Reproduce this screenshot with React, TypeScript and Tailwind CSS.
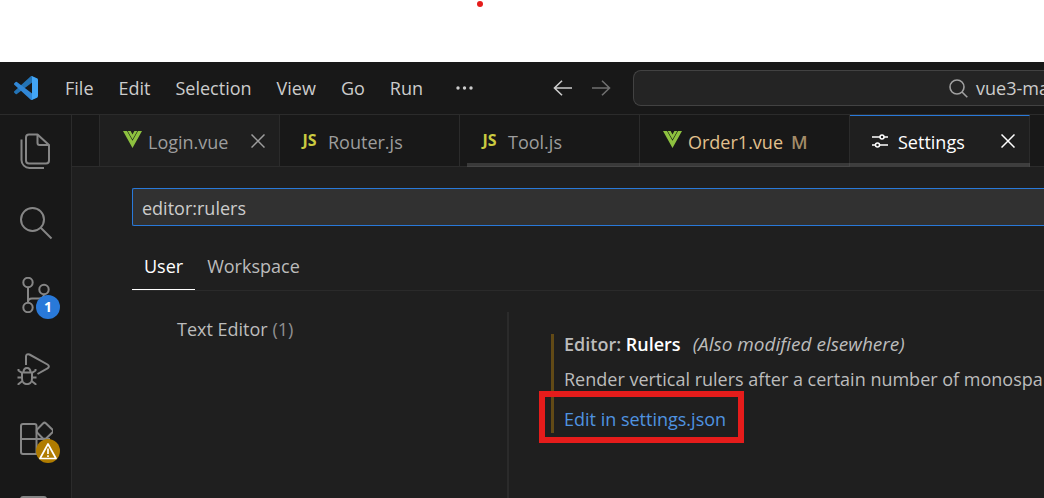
import type { ReactNode } from "react"

const menuItems = ["File", "Edit", "Selection", "View", "Go", "Run"]

function CodeLogo() {
  return (
    <svg viewBox="0 0 100 100" className="h-6 w-6 shrink-0" aria-hidden="true">
      <path
        fill="#2373b5"
        d="M96.46 10.8L75.86.88A6.2 6.2 0 0 0 68.75 2.08L1.3 63.58a4.17 4.17 0 0 0 0 6.17l5.51 5a4.17 4.17 0 0 0 5.32.24L93.36 13.37A4.14 4.14 0 0 1 100 16.67v-.24a6.25 6.25 0 0 0-3.54-5.63Z"
      />
      <path
        fill="#3187d6"
        d="M96.46 89.2l-20.6 9.92a6.2 6.2 0 0 1-7.11-1.2L1.3 36.42a4.17 4.17 0 0 1 0-6.17l5.51-5a4.17 4.17 0 0 1 5.32-.24l81.23 61.62A4.14 4.14 0 0 0 100 83.33v.24a6.25 6.25 0 0 1-3.54 5.63Z"
      />
      <path
        fill="#42a5f5"
        d="M75.86 99.13a6.2 6.2 0 0 1-7.11-1.21c2.3 2.3 6.25.67 6.25-2.59V4.67c0-3.26-3.94-4.9-6.25-2.59a6.2 6.2 0 0 1 7.11-1.21l20.6 9.91A6.25 6.25 0 0 1 100 16.41v67.18a6.25 6.25 0 0 1-3.54 5.63Z"
      />
    </svg>
  )
}

function VueIcon() {
  return (
    <svg viewBox="0 0 19 17" className="mb-1 h-[17px] w-[19px] shrink-0 fill-[#8dc13f]" aria-hidden="true">
      <path d="M0 0H4L9.5 9.8L15 0H19L9.5 17Z" />
      <path d="M4.7 0H7.6L9.5 3.4L11.4 0H14.3L9.5 8.6Z" />
    </svg>
  )
}

function JsIcon() {
  return (
    <span className="mb-1 w-[19px] shrink-0 text-center font-['Noto_Sans',sans-serif] text-base leading-5 font-bold text-[#cbcb41]">
      JS
    </span>
  )
}

function CloseIcon() {
  return (
    <svg viewBox="0 0 14 14" className="mb-0.5 h-3.5 w-3.5" fill="none" stroke="currentColor" strokeWidth="1.5">
      <path d="M0.5 0.5L13.5 13.5M13.5 0.5L0.5 13.5" />
    </svg>
  )
}

function SlidersIcon() {
  return (
    <svg viewBox="0 0 16 14" className="mb-0.5 h-3.5 w-4 shrink-0" fill="none" stroke="currentColor" strokeWidth="1.5">
      <path d="M0 3H8M12 3H16M0 11H3.5M7.5 11H16" />
      <circle cx="10" cy="3" r="2" />
      <circle cx="5.5" cy="11" r="2" />
    </svg>
  )
}

function Arrow({ back }: { back?: boolean }) {
  return (
    <svg viewBox="0 0 19 16" className="h-4 w-[19px]" fill="none" stroke="currentColor" strokeWidth="1.6">
      {back ? <path d="M9 0.7L1.5 8L9 15.3M1.5 8H19" /> : <path d="M10 0.7L17.5 8L10 15.3M17.5 8H0" />}
    </svg>
  )
}

function ActivityItem({ label, badge, children }: { label: string; badge?: ReactNode; children: ReactNode }) {
  return (
    <button type="button" aria-label={label} className="relative h-[72px] shrink-0 pl-[17px] text-[#868686]">
      <svg viewBox="0 0 36 36" className="h-9 w-9" fill="none" stroke="currentColor" strokeWidth="2" strokeLinejoin="round">
        {children}
      </svg>
      {badge}
    </button>
  )
}

function ActivityBar() {
  return (
    <nav className="flex w-[72px] shrink-0 flex-col overflow-hidden border-r border-[#2b2b2b] bg-[#181818]">
      <ActivityItem label="Explorer">
        <path d="M12 1.5H20.5L32 12V27.5A3 3 0 0 1 29 30.5H12A3 3 0 0 1 9 27.5V4.5A3 3 0 0 1 12 1.5Z" />
        <path d="M20.5 1.5V10A2 2 0 0 0 22.5 12H32" />
        <path d="M4.5 6.5V27A8 8 0 0 0 12.5 35H27" />
      </ActivityItem>
      <ActivityItem label="Search">
        <circle cx="15.5" cy="14.5" r="11.5" />
        <path d="M23.5 22.5L34.5 33.5" />
      </ActivityItem>
      <ActivityItem
        label="Source Control"
        badge={
          <span className="absolute top-9 left-9 grid h-6 w-6 place-items-center rounded-full bg-[#2979d9] text-sm leading-5 font-bold text-white">
            1
          </span>
        }
      >
        <circle cx="11" cy="5.5" r="4.7" />
        <circle cx="27" cy="12.5" r="4.7" />
        <circle cx="11" cy="30.5" r="4.7" />
        <path d="M11 10V26M27 17C27 20 25 21.5 22 21.5H15C12.5 21.5 11 23 11 25" />
      </ActivityItem>
      <ActivityItem label="Run and Debug">
        <path d="M9 16V7.5C9 5.5 10.8 4.6 12.5 5.5L30.5 15.5C32.3 16.6 32.3 18.4 30.5 19.4L20.5 25" />
        <path d="M5 23.5H15V29.5C15 37 5 37 5 29.5ZM6.5 23.5C6.5 17.5 13.5 17.5 13.5 23.5" />
        <path d="M1.5 20V21.5L5 24M18.5 20V21.5L15 24M0.5 28.5H5M15 28.5H19.5M1.5 36.5V35L5.5 32M18.5 36.5V35L14.5 32" />
      </ActivityItem>
      <ActivityItem
        label="Extensions"
        badge={
          <span className="absolute top-9 left-9 grid h-6 w-6 place-items-center rounded-full bg-[#b07c00]">
            <svg viewBox="0 0 18 17" className="h-[17px] w-[18px]" fill="none" stroke="#fff" strokeWidth="1.7" strokeLinejoin="round">
              <path d="M9 1L17 15.5H1Z" />
              <path d="M9 5.5V11M9 12.2V14" />
            </svg>
          </span>
        }
      >
        <path d="M6 3H17.5A2 2 0 0 1 19.5 5V33H6A2 2 0 0 1 4 31V5A2 2 0 0 1 6 3ZM4 18H33M19.5 33H30" />
        <path d="M26.2 2.2Q27.5 1 28.8 2.2L35.5 8.7Q36.7 10 35.5 11.3L28.8 17.8H26.2L19.8 11.3V8.7Z" />
      </ActivityItem>
      <ActivityItem label="Testing">
        <rect x="4" y="4" width="25" height="28" rx="2" />
      </ActivityItem>
    </nav>
  )
}

function TitleBar() {
  return (
    <header className="flex h-[53px] shrink-0 items-center border-b border-[#2b2b2b] bg-[#181818] pl-3.5 text-[#cccccc]">
      <CodeLogo />
      <nav className="flex w-[515px] shrink-0 items-center gap-px pl-[15px]">
        {menuItems.map((item) => (
          <button key={item} type="button" className="px-3">
            {item}
          </button>
        ))}
        <button type="button" aria-label="More" className="ml-2 px-3">
          <svg viewBox="0 0 17 4" className="h-1 w-[17px] fill-current">
            <circle cx="2" cy="2" r="1.7" />
            <circle cx="8.5" cy="2" r="1.7" />
            <circle cx="15" cy="2" r="1.7" />
          </svg>
        </button>
      </nav>
      <div className="flex w-20 shrink-0 gap-5">
        <button type="button" aria-label="Go Back">
          <Arrow back />
        </button>
        <button type="button" aria-label="Go Forward" className="text-[#6f6f6f]">
          <Arrow />
        </button>
      </div>
      <button
        type="button"
        className="flex h-9 min-w-0 flex-1 items-center gap-2 overflow-hidden rounded-l-lg border border-r-0 border-[#424242] bg-[#242424] pl-[315px] whitespace-nowrap"
      >
        <svg viewBox="0 0 19 19" className="h-[19px] w-[19px] shrink-0" fill="none" stroke="#a0a0a0" strokeWidth="1.6">
          <circle cx="8" cy="8" r="7" />
          <path d="M13 13L18.3 18.3" />
        </svg>
        vue3-ma
      </button>
    </header>
  )
}

function TabBar() {
  return (
    <div role="tablist" className="relative flex h-[52px] shrink-0 bg-[#181818] text-[#9d9d9d]">
      <div className="w-7 shrink-0 border-r border-b border-[#2b2b2b]" />
      <div role="tab" className="flex w-[180px] shrink-0 items-center border-r border-b border-[#2b2b2b] bg-[#1f1f1f] pt-0.5 pr-3.5 pl-[23px]">
        <VueIcon />
        <span className="flex-1 pl-1.5">Login.vue</span>
        <button type="button" aria-label="Close Login.vue">
          <CloseIcon />
        </button>
      </div>
      <div role="tab" className="flex w-[180px] shrink-0 items-center border-r border-b border-[#2b2b2b] pt-0.5 pl-5">
        <JsIcon />
        <span className="pl-[9px]">Router.js</span>
      </div>
      <div role="tab" className="flex w-[180px] shrink-0 items-center border-r border-b border-[#2b2b2b] pt-0.5 pl-5">
        <JsIcon />
        <span className="pl-[9px]">Tool.js</span>
      </div>
      <div role="tab" className="flex w-[210px] shrink-0 items-center border-r border-b border-[#2b2b2b] pt-0.5 pl-[23px] text-[#e2c08d]">
        <VueIcon />
        <span className="pl-1.5">Order1.vue</span>
        <span className="pl-2 font-semibold text-[#a48c68]">M</span>
      </div>
      <div
        role="tab"
        aria-selected="true"
        className="flex w-[180px] shrink-0 items-center border-t border-r border-t-[#2979d9] border-r-[#2b2b2b] bg-[#1f1f1f] pr-3.5 pl-[22px] text-white"
      >
        <SlidersIcon />
        <span className="flex-1 pl-2.5">Settings</span>
        <button type="button" aria-label="Close Settings">
          <CloseIcon />
        </button>
      </div>
      <div className="flex-1 border-b border-[#2b2b2b]" />
      {/* horizontal scroll thumb over the tabs */}
      <div className="absolute right-3.5 bottom-0 left-[395px] h-1 bg-[#797979]/35" />
    </div>
  )
}

function SettingsEditor() {
  return (
    <main className="flex min-h-0 flex-1 flex-col pt-[21px] pl-[60px] text-[#bcbcbc]">
      <input
        type="text"
        aria-label="Search settings"
        defaultValue="editor:rulers"
        className="h-[38px] w-full shrink-0 rounded-l-xs border border-r-0 border-[#2979d9] bg-[#313131] px-[9px] pt-0.5 text-[#cccccc] outline-none"
      />
      <div className="mt-4 flex h-[49px] shrink-0 border-b border-[#2a2a2a]">
        <button type="button" className="border-b border-white px-3 text-white">
          User
        </button>
        <button type="button" className="border-b border-transparent px-3">
          Workspace
        </button>
      </div>
      <div className="flex min-h-0 flex-1 pt-[21px]">
        <aside className="w-[377px] shrink-0 border-r-2 border-[#2b2b2b] pt-[3px] pl-[45px]">
          <a href="#text-editor">
            Text Editor <span className="text-[#8f8f8f]">(1)</span>
          </a>
        </aside>
        <section className="min-w-0 flex-1 overflow-hidden pt-[22px] pl-[42px] whitespace-nowrap">
          <div className="flex h-[99px] flex-col border-l-3 border-[#624a16] pl-2.5">
            <h2 className="flex items-baseline gap-3 leading-5">
              <span className="font-semibold">
                Editor: <span className="text-white">Rulers</span>
              </span>
              <em className="text-[19px]">(Also modified elsewhere)</em>
            </h2>
            <p className="mt-[15px] leading-5">Render vertical rulers after a certain number of monospa</p>
            <div className="relative mt-4 flex h-7 items-center">
              <a href="#settings-json" className="text-[#4f93e0]">
                Edit in settings.json
              </a>
              <div className="pointer-events-none absolute -top-3.5 -left-[25px] h-[52px] w-[205px] border-6 border-[#e51c1b]" />
            </div>
          </div>
        </section>
      </div>
    </main>
  )
}

export default function App() {
  return (
    <div className="flex h-screen flex-col overflow-hidden bg-white font-['Open_Sans','Noto_Sans',sans-serif] text-[18px] leading-7">
      <div className="flex h-[62px] shrink-0 justify-center pt-px pr-[84px]">
        <span className="h-1.5 w-1.5 rounded-full bg-[#e51c1b]" />
      </div>
      <TitleBar />
      <div className="flex min-h-0 flex-1">
        <ActivityBar />
        <div className="flex min-w-0 flex-1 flex-col bg-[#1f1f1f]">
          <TabBar />
          <SettingsEditor />
        </div>
      </div>
    </div>
  )
}
